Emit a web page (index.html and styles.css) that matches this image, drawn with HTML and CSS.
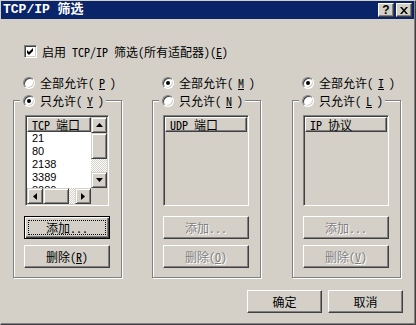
FILE: index.html
```html
<!DOCTYPE html>
<html lang="zh-CN">
<head>
    <meta charset="UTF-8">
    <title>TCP/IP 筛选</title>
    <link rel="stylesheet" href="styles.css">
</head>
<body>
    <div class="window">
        <!-- 标题栏 -->
        <div class="titlebar">
            <span class="title">TCP/IP 筛选</span>
            <div class="caption-buttons">
                <span class="cap-btn cap-help">?</span>
                <span class="cap-btn">
                    <svg width="8" height="7" viewBox="0 0 8 7"><path d="M0 0h2l2 2.5 2-2.5h2l-3 3.5 3 3.5h-2l-2-2.5-2 2.5h-2l3-3.5z"/></svg>
                </span>
            </div>
        </div>

        <div class="content">
            <div class="check-row">
                <span class="checkbox">
                    <svg width="9" height="9" viewBox="0 0 9 9"><path d="M1 3l2 2 4-4v3l-4 4-2-2z"/></svg>
                </span>
                <span>启用 TCP/IP 筛选(所有适配器)(<u>E</u>)</span>
            </div>

            <div class="columns">
                <!-- TCP -->
                <div class="column">
                    <div class="radio-row"><span class="radio"></span>全部允许(<u>P</u>)</div>
                    <div class="group">
                        <div class="radio-row legend"><span class="radio on"></span>只允许(<u>Y</u>)</div>
                        <div class="listbox narrow">
                            <div class="list-view">
                                <div class="list-header">TCP 端口</div>
                                <div class="list-item">21</div>
                                <div class="list-item">80</div>
                                <div class="list-item">2138</div>
                                <div class="list-item">3389</div>
                                <div class="list-item">8080</div>
                            </div>
                            <div class="vscroll">
                                <span class="sb-btn"><svg width="7" height="4" viewBox="0 0 7 4"><path d="M3.5 0L7 4H0z"/></svg></span>
                                <span class="sb-thumb v"></span>
                                <span class="sb-track"></span>
                                <span class="sb-btn"><svg width="7" height="4" viewBox="0 0 7 4"><path d="M0 0h7L3.5 4z"/></svg></span>
                            </div>
                            <div class="hscroll">
                                <span class="sb-btn"><svg width="4" height="7" viewBox="0 0 4 7"><path d="M4 0v7L0 3.5z"/></svg></span>
                                <span class="sb-thumb h"></span>
                                <span class="sb-track"></span>
                                <span class="sb-btn"><svg width="4" height="7" viewBox="0 0 4 7"><path d="M0 0l4 3.5L0 7z"/></svg></span>
                            </div>
                            <div class="sb-corner"></div>
                        </div>
                        <button class="btn default"><span class="focus">添加...</span></button>
                        <button class="btn">删除(<u>R</u>)</button>
                    </div>
                </div>

                <!-- UDP -->
                <div class="column">
                    <div class="radio-row"><span class="radio on"></span>全部允许(<u>M</u>)</div>
                    <div class="group">
                        <div class="radio-row legend"><span class="radio"></span>只允许(<u>N</u>)</div>
                        <div class="listbox disabled">
                            <div class="list-view">
                                <div class="list-header">UDP 端口</div>
                            </div>
                        </div>
                        <button class="btn" disabled>添加...</button>
                        <button class="btn" disabled>删除(<u>O</u>)</button>
                    </div>
                </div>

                <!-- IP -->
                <div class="column">
                    <div class="radio-row"><span class="radio on"></span>全部允许(<u>I</u>)</div>
                    <div class="group">
                        <div class="radio-row legend"><span class="radio"></span>只允许(<u>L</u>)</div>
                        <div class="listbox disabled">
                            <div class="list-view">
                                <div class="list-header">IP 协议</div>
                            </div>
                        </div>
                        <button class="btn" disabled>添加...</button>
                        <button class="btn" disabled>删除(<u>V</u>)</button>
                    </div>
                </div>
            </div>

            <div class="dialog-buttons">
                <button class="btn wide">确定</button>
                <button class="btn wide">取消</button>
            </div>
        </div>
    </div>
</body>
</html>
```

FILE: styles.css
```css
/* 重置 */
* {
    margin: 0;
    padding: 0;
    box-sizing: border-box;
}

body {
    background: #d4d0c8;
    color: #000;
    font-family: "Noto Sans Mono CJK SC", "Noto Sans CJK SC", sans-serif;
    font-size: 12px;
    line-height: 14px;
}

u {
    text-decoration: underline;
    text-underline-offset: 1px;
}

/* 窗口 */
.window {
    width: 416px;
    height: 325px;
    background: #d4d0c8;
    border: 1px solid;
    border-color: #d4d0c8 #404040 #404040 #d4d0c8;
    box-shadow: inset -1px -1px #808080;
}

/* 标题栏 */
.titlebar {
    height: 18px;
    margin-right: 1px;
    padding: 0 2px 0 2px;
    display: flex;
    align-items: center;
    background: #0a246a;
}

.title {
    color: #fff;
    font-family: "Liberation Mono", "Noto Sans CJK SC", monospace;
    font-weight: bold;
    font-size: 13px;
}

.caption-buttons {
    margin-left: auto;
    display: flex;
    gap: 2px;
}

.cap-btn {
    width: 16px;
    height: 14px;
    display: flex;
    align-items: center;
    justify-content: center;
    background: #d4d0c8;
    border: 1px solid;
    border-color: #fff #404040 #404040 #fff;
    box-shadow: inset -1px -1px #808080;
}

.cap-help {
    font-family: "Liberation Sans", sans-serif;
    font-weight: bold;
    font-size: 12px;
    line-height: 12px;
}

/* 内容 */
.content {
    padding: 0 12px;
}

.check-row {
    margin: 26px 0 0 11px;
    height: 13px;
    display: flex;
    align-items: center;
    gap: 5px;
}

.checkbox {
    width: 13px;
    height: 13px;
    padding: 1px;
    background: #fff;
    border: 1px solid;
    border-color: #808080 #fff #fff #808080;
    box-shadow: inset 1px 1px #404040, inset -1px -1px #d4d0c8;
    display: flex;
}

.columns {
    margin-top: 16px;
    display: grid;
    grid-template-columns: 109px 110px 109px;
    column-gap: 30px;
}

/* 单选按钮 */
.radio-row {
    height: 18px;
    padding-left: 10px;
    display: flex;
    align-items: center;
    gap: 5px;
    white-space: nowrap;
}

.radio {
    width: 12px;
    height: 12px;
    flex: none;
    border-radius: 50%;
    background: #fff;
    border: 1px solid;
    border-color: #808080 #fff #fff #808080;
    box-shadow: inset 1px 1px #404040, inset -1px -1px #d4d0c8;
    display: flex;
    align-items: center;
    justify-content: center;
}

.radio.on::after {
    content: "";
    width: 4px;
    height: 4px;
    border-radius: 50%;
    background: #000;
}

/* 分组框 */
.group {
    position: relative;
    width: 109px;
    height: 178px;
    margin-top: 8px;
    padding: 14px 0 0 10px;
    border: 1px solid #808080;
    box-shadow: 1px 1px #fff, inset 1px 1px #fff;
}

.legend {
    position: absolute;
    top: -9px;
    left: 6px;
    padding: 0 2px 0 3px;
    background: #d4d0c8;
}

/* 列表框 */
.listbox {
    width: 86px;
    height: 91px;
    padding: 1px;
    background: #fff;
    border: 1px solid;
    border-color: #808080 #fff #fff #808080;
    box-shadow: inset 1px 1px #404040, inset -1px -1px #d4d0c8;
    display: grid;
    grid-template-columns: 1fr 16px;
    grid-template-rows: 1fr 16px;
}

.listbox.narrow {
    width: 84px;
    margin-left: 1px;
}

.listbox.disabled {
    background: #d4d0c8;
    display: block;
}

.list-view {
    overflow: hidden;
}

.list-header {
    height: 15px;
    padding-left: 4px;
    line-height: 13px;
    background: #d4d0c8;
    border: 1px solid;
    border-color: #fff #404040 #404040 #fff;
    box-shadow: inset -1px -1px #808080;
    white-space: nowrap;
}

.list-item {
    height: 13px;
    padding-left: 5px;
    font-family: "Liberation Sans", sans-serif;
    font-size: 11px;
    line-height: 13px;
}

/* 滚动条 */
.vscroll,
.hscroll {
    display: flex;
    background: #d4d0c8;
}

.vscroll {
    flex-direction: column;
}

.sb-btn,
.sb-thumb {
    flex: none;
    width: 16px;
    height: 16px;
    display: flex;
    align-items: center;
    justify-content: center;
    background: #d4d0c8;
    border: 1px solid;
    border-color: #d4d0c8 #404040 #404040 #d4d0c8;
    box-shadow: inset 1px 1px #fff, inset -1px -1px #808080;
}

.sb-thumb.v {
    height: 26px;
}

.sb-thumb.h {
    width: 26px;
}

.sb-track {
    flex: 1;
    background: repeating-conic-gradient(#fff 0 25%, #d4d0c8 0 50%) 0 0 / 2px 2px;
}

.sb-corner {
    background: #d4d0c8;
}

/* 按钮 */
.btn {
    display: flex;
    align-items: center;
    justify-content: center;
    width: 86px;
    height: 23px;
    margin-top: 6px;
    font: inherit;
    color: #000;
    background: #d4d0c8;
    border: 1px solid;
    border-color: #fff #404040 #404040 #fff;
    box-shadow: inset -1px -1px #808080;
}

.listbox + .btn {
    margin-top: 10px;
}

.btn.default {
    padding: 3px;
    border-color: #000;
    box-shadow: inset 1px 1px #fff, inset -1px -1px #404040, inset -2px -2px #808080;
}

.focus {
    flex: 1;
    align-self: stretch;
    display: flex;
    align-items: center;
    justify-content: center;
    border: 1px dotted #000;
}

.btn:disabled {
    color: #808080;
    text-shadow: 1px 1px #fff;
}

.dialog-buttons {
    margin-top: 12px;
    display: flex;
    justify-content: flex-end;
    gap: 6px;
}

.dialog-buttons .btn {
    width: 75px;
    margin-top: 0;
}
```
